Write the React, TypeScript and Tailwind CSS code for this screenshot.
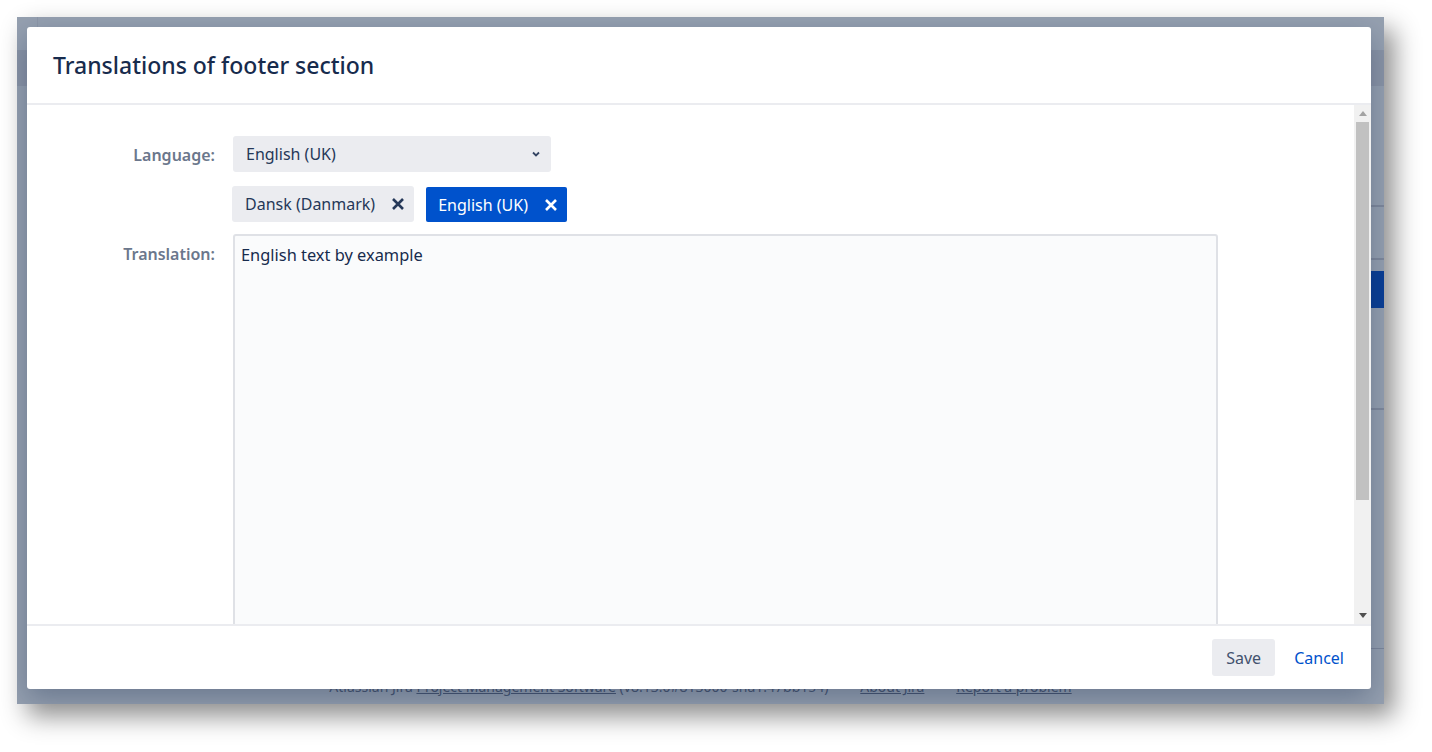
import React from "react";

const font = { fontFamily: '"Noto Sans", "Open Sans", Arial, sans-serif' };

function XIcon({ color }: { color: string }) {
  return (
    <svg width="14" height="14" viewBox="0 0 14 14" fill="none">
      <path d="M2 2 L12 12 M12 2 L2 12" stroke={color} strokeWidth="2.6" strokeLinecap="butt" />
    </svg>
  );
}

export default function App() {
  return (
    <div className="w-[1432px] h-[752px] bg-white p-[17px]" style={font}>
      <div className="relative w-[1367px] h-[687px] bg-[#95a0b0] shadow-[10px_12px_24px_rgba(0,0,0,0.45)] overflow-hidden">
        {/* background jira page (seen through overlay) */}
        <div className="flex flex-col h-full">
          <div className="h-[33px] shrink-0 flex">
            <div className="w-[21px] border-r border-[#8d97a8]" />
          </div>
          <div className="h-[36px] shrink-0 bg-[#8a94a6]" />
          <div className="flex justify-end shrink-0">
            <div className="w-[40px] flex flex-col">
              <div className="h-[121px] border-b-2 border-[#7f899c]">
                <div className="mt-[12px] h-[20px] text-[15px] text-[#5d6a80] leading-[20px] ml-[-8px]">an</div>
              </div>
              <div className="h-[53px] border-b-2 border-[#7f899c]" />
              <div className="h-[11px]" />
              <div className="h-[37px] bg-[#0b3f95] text-[#9fb0cc] font-bold text-[18px] leading-[37px] ml-[-6px]">ra</div>
              <div className="h-[102px] border-b-2 border-[#7f899c]" />
              <div className="h-[239px] border-b border-[#7d879b]" />
            </div>
          </div>
          <div className="flex-1 flex justify-center">
            <div className="text-[14px] leading-[20px] text-[#4a5872] mt-[28px] whitespace-nowrap">
              Atlassian Jira <span className="underline">Project Management Software</span> (v8.13.0#813000-sha1:47bb154)
              <span className="mx-[14px]">·</span>
              <span className="underline">About Jira</span>
              <span className="mx-[14px]">·</span>
              <span className="underline">Report a problem</span>
            </div>
          </div>
        </div>

        {/* modal */}
        <div className="absolute left-[10px] top-[10px] w-[1344px] h-[662px] bg-white rounded-[3px] shadow-[0_10px_28px_rgba(9,30,66,0.3)] flex flex-col overflow-hidden">
          <div className="h-[78px] shrink-0 flex items-center px-[26px] border-b-2 border-[#ebecf0]">
            <h2 className="text-[23px] font-medium text-[#172b4d] leading-none">Translations of footer section</h2>
          </div>
          <div className="flex-1 flex min-h-0">
            <div className="flex-1 overflow-hidden pt-[31px]">
              <div className="flex items-center">
                <div className="w-[188px] text-right text-[16px] font-semibold text-[#6b778c] mt-[2px]">Language:</div>
                <div className="ml-[18px] w-[318px] h-[36px] bg-[#ebecf0] rounded-[3px] flex items-center justify-between pl-[13px] pr-[10px]">
                  <span className="text-[16px] text-[#253858]">English (UK)</span>
                  <svg width="10" height="8" viewBox="0 0 10 8">
                    <path d="M2 2.5 L5 5.5 L8 2.5" stroke="#344563" strokeWidth="1.8" fill="none" />
                  </svg>
                </div>
              </div>
              <div className="flex mt-[14px] ml-[205px] gap-[12px]">
                <div className="h-[36px] bg-[#ebecf0] rounded-[3px] flex items-center pl-[13px] pr-[9px] gap-[16px]">
                  <span className="text-[16px] text-[#253858]">Dansk (Danmark)</span>
                  <XIcon color="#253858" />
                </div>
                <div className="h-[35px] mt-[1px] bg-[#0052cc] rounded-[2px] flex items-center pl-[12px] pr-[9px] gap-[16px]">
                  <span className="text-[16px] text-white">English (UK)</span>
                  <XIcon color="#ffffff" />
                </div>
              </div>
              <div className="flex mt-[12px]">
                <div className="w-[188px] text-right text-[16px] font-semibold text-[#6b778c] pt-[8px]">Translation:</div>
                <div className="ml-[18px] w-[985px] h-[420px] bg-[#fafbfc] border-2 border-[#dfe1e6] rounded-[3px] px-[6px] pt-[7px] text-[16.4px] text-[#172b4d]">
                  English text by example
                </div>
              </div>
            </div>
            {/* scrollbar */}
            <div className="w-[17px] bg-[#f1f1f1] flex flex-col items-center">
              <div className="h-[17px] flex items-center justify-center">
                <svg width="8" height="5" viewBox="0 0 8 5"><path d="M0 5 L4 0 L8 5 Z" fill="#a3a3a3" /></svg>
              </div>
              <div className="w-[13px] h-[378px] bg-[#c1c1c1]" />
              <div className="flex-1" />
              <div className="h-[17px] flex items-center justify-center">
                <svg width="8" height="5" viewBox="0 0 8 5"><path d="M0 0 L8 0 L4 5 Z" fill="#505050" /></svg>
              </div>
            </div>
          </div>
          <div className="h-[65px] shrink-0 border-t-2 border-[#ebecf0] flex items-center justify-end pr-[16px] gap-[8px]">
            <button className="h-[37px] w-[63px] rounded-[3px] bg-[#ebecf0] text-[16px] text-[#42526e]">Save</button>
            <button className="h-[37px] px-[11px] text-[16px] text-[#0052cc]">Cancel</button>
          </div>
        </div>
      </div>
    </div>
  );
}
